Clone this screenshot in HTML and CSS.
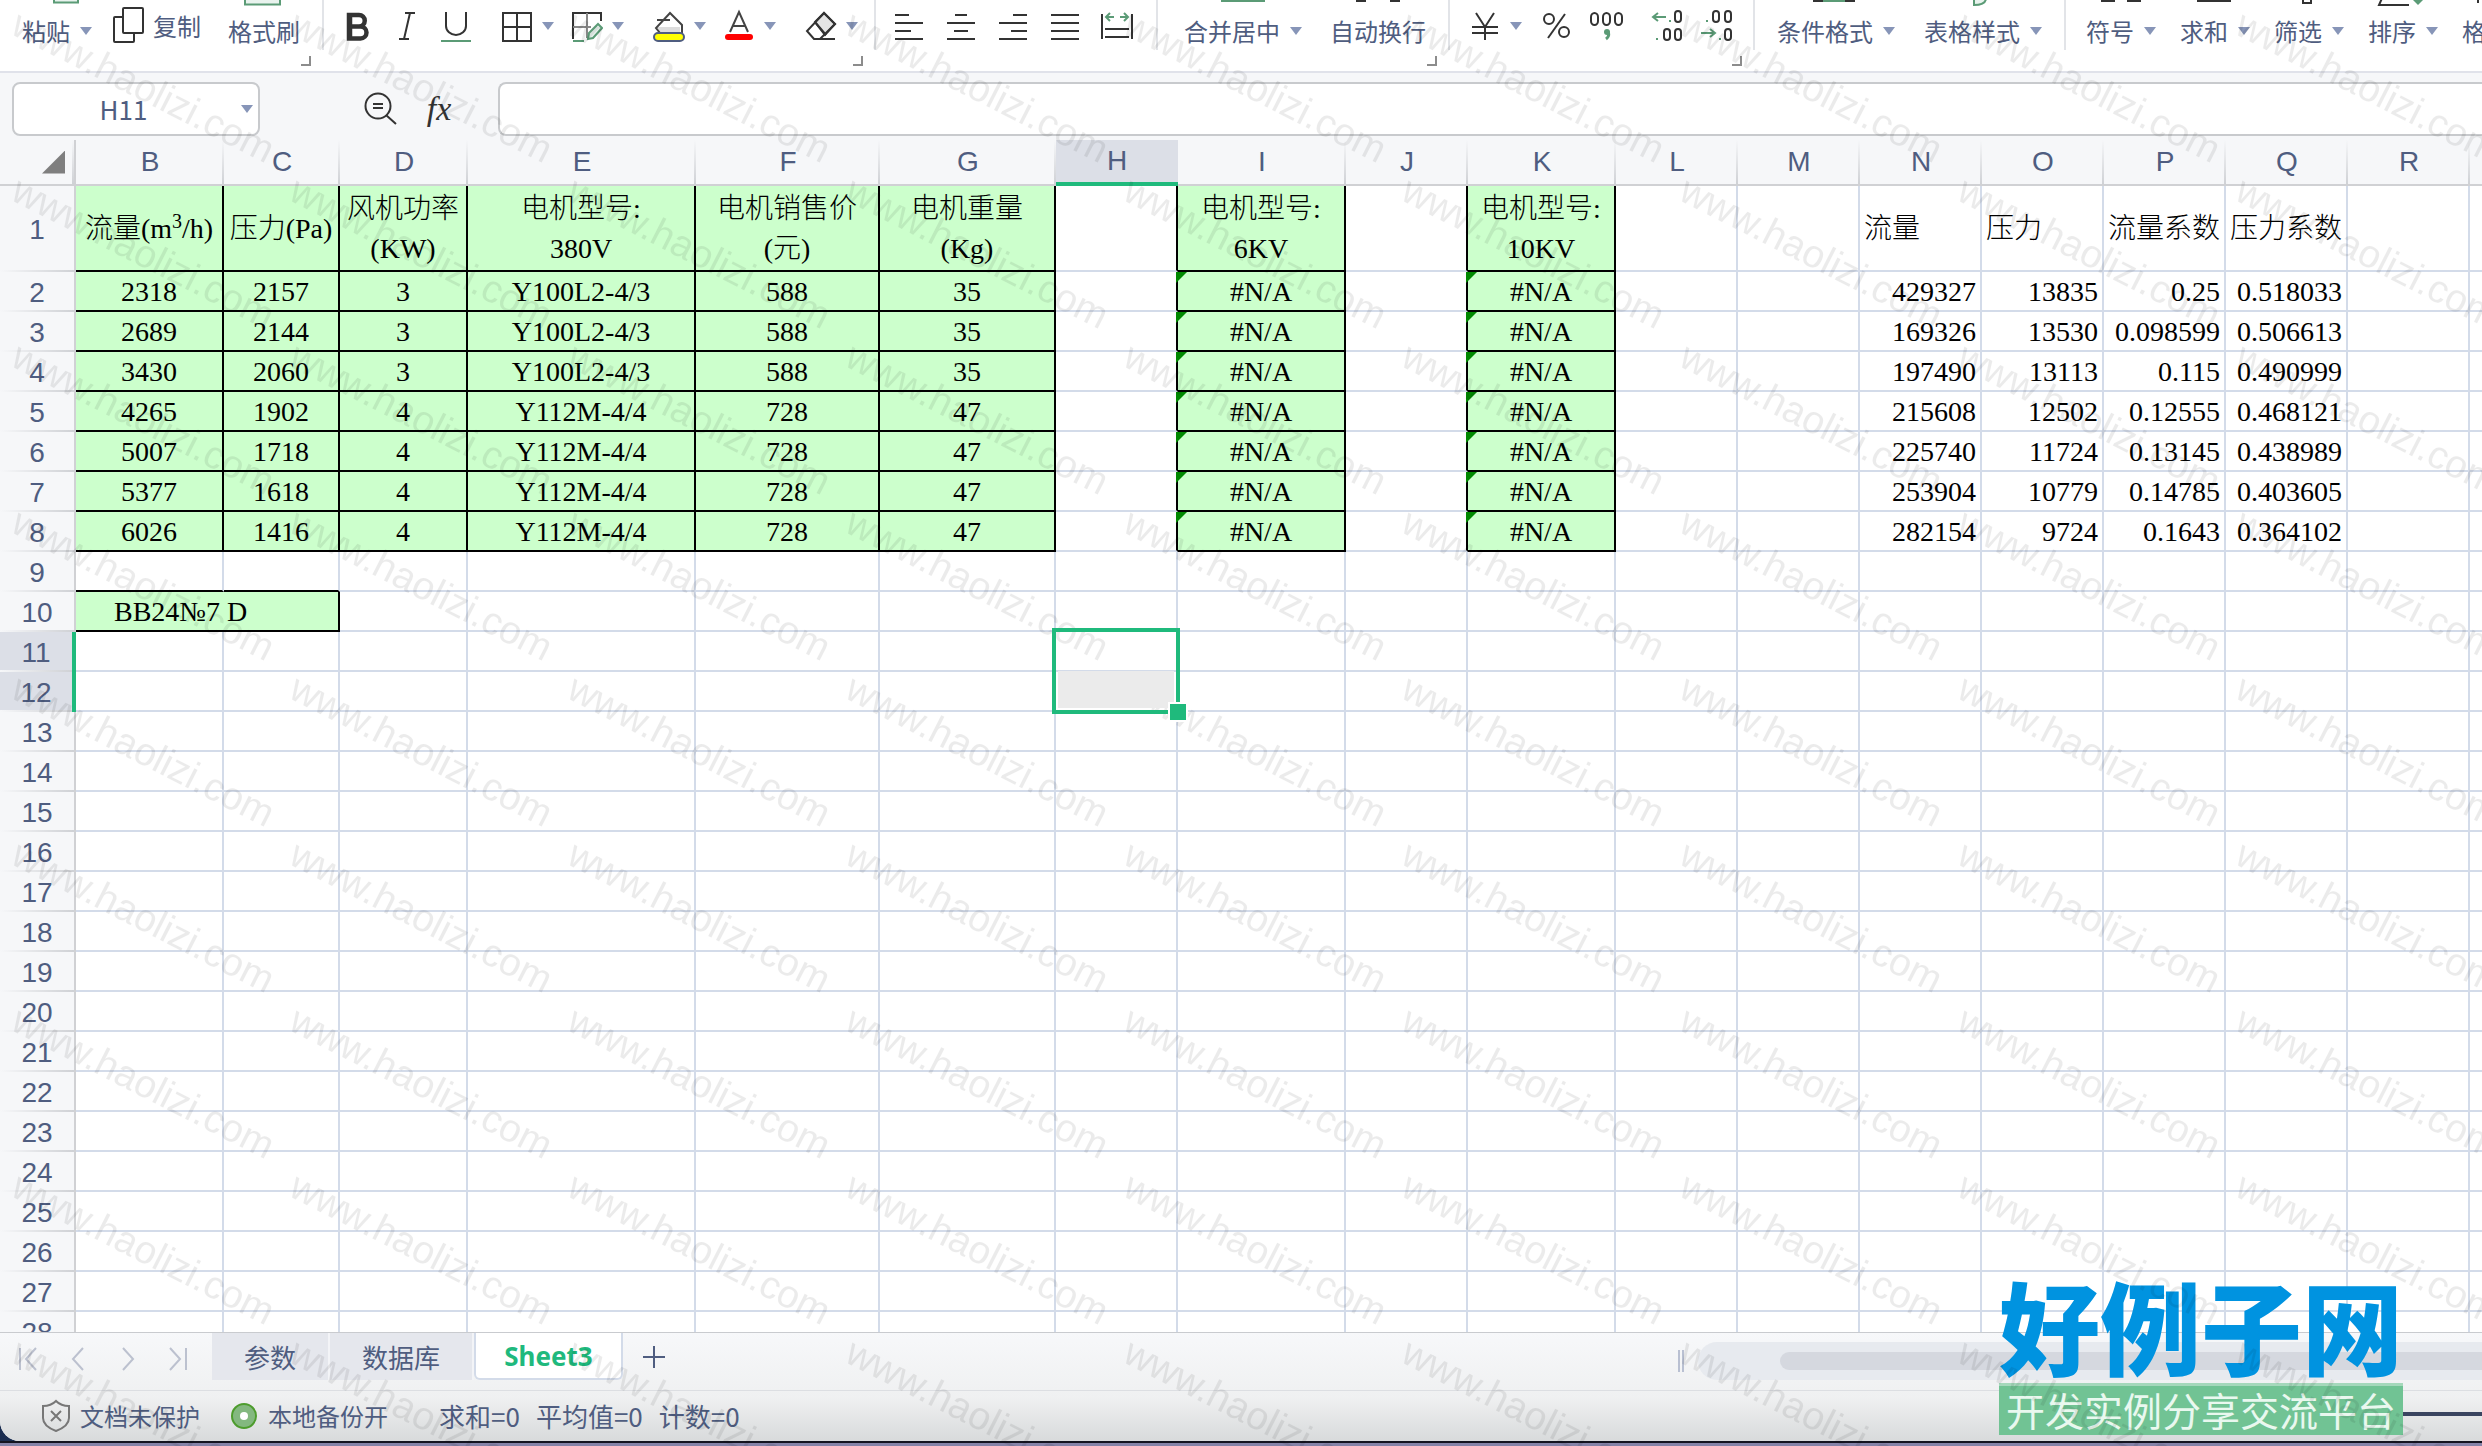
FILE: index.html
```html
<!DOCTYPE html>
<html lang="zh-CN">
<head>
<meta charset="utf-8">
<title>Sheet3</title>
<link rel="stylesheet" href="styles.css">
</head>
<body>
<div class="app">
  <header class="ribbon">
    <div class="group group-clip">
      <button class="labeled"><svg class="peek" width="68" height="6" viewBox="0 0 68 6"><path d="M31-9h24v11.500h-24z" fill="#e9f3ee" stroke="#5b9b76" stroke-width="2"/></svg><span>粘贴<i class="caret"></i></span></button>
      <button class="inline"><svg width="32" height="38" viewBox="0 0 32 38" fill="#fff" stroke="#333" stroke-width="2"><rect x="1" y="10" width="20" height="25" rx="1"/><rect x="10" y="1" width="20" height="25" rx="1"/></svg>复制</button>
      <button class="labeled"><svg class="peek" width="72" height="6" viewBox="0 0 72 6"><path d="M17-9h35v13.500h-35z" fill="#e9f3ee" stroke="#5b9b76" stroke-width="2"/></svg><span>格式刷</span></button>
      <i class="launcher"></i>
    </div>

    <div class="group group-font">
      <div class="set">
        <button class="tool" aria-label="加粗"><svg width="32" height="36" viewBox="0 0 32 36" fill="none" stroke="#333" stroke-width="4.500"><path d="M7 7h10a5.500 5.500 0 0 1 0 11.500H7zM7 18.500h11.500a6 6 0 0 1 0 12H7zM8 5v27"/></svg></button>
        <button class="tool" aria-label="斜体"><svg width="32" height="36" viewBox="0 0 32 36" fill="none" stroke="#333" stroke-width="2"><path d="M14 5h10M8 31h10M19 5l-6 26"/></svg></button>
        <button class="tool" aria-label="下划线"><svg width="32" height="36" viewBox="0 0 32 36" fill="none" stroke="#333" stroke-width="2"><path d="M6 4v14a10 9 0 0 0 20 0V4"/><path d="M1 33h30" stroke="#5b9b76"/></svg></button>
      </div>
      <div class="set">
        <button class="tool" aria-label="边框"><svg width="32" height="36" viewBox="0 0 32 36" fill="none" stroke="#333" stroke-width="2"><path d="M2 5h28v28H2zM16 5v28M2 19h28"/></svg><i class="caret"></i></button>
        <button class="tool" aria-label="单元格"><svg width="32" height="36" viewBox="0 0 32 36" fill="none" stroke-width="2"><path d="M2 31V5h28v8" stroke="#333"/><path d="M16 5v25M2 19h18" stroke="#888"/><path d="M2 33h11M17 31l1-6 9-9 4 4-9 10z" fill="#e9f3ee" stroke="#5b9b76"/></svg><i class="caret"></i></button>
      </div>
      <div class="set">
        <button class="tool" aria-label="填充颜色"><svg width="32" height="36" viewBox="0 0 32 36" fill="none" stroke="#444" stroke-width="2"><path d="M3 19h24v5H5z" fill="#ddd" stroke="none"/><path d="M4 12h13M7 25l-4-5L17 5l12 12v8"/><rect x="1" y="25" width="30" height="8" rx="4" fill="#ff0" stroke="#4f5d80"/></svg><i class="caret"></i></button>
        <button class="tool" aria-label="字体颜色"><svg width="32" height="36" viewBox="0 0 32 36" fill="none" stroke="#444" stroke-width="2"><path d="M7 24L16 4l9 20M10 18h12"/><rect x="2" y="26" width="28" height="6" rx="3" fill="#f00" stroke="none"/></svg><i class="caret"></i></button>
      </div>
      <div class="set">
        <button class="tool" aria-label="清除"><svg width="32" height="36" viewBox="0 0 32 36" fill="none" stroke="#333" stroke-width="2"><path d="M10 14l9-9 11 11-10 11z" fill="#e4e4e4"/><path d="M19 5l11 11-15 15H9l-7-8zM10 14l11 13M9 31h21"/></svg><i class="caret"></i></button>
      </div>
      <i class="launcher"></i>
    </div>

    <div class="group group-align">
      <button class="tool" aria-label="左对齐"><svg width="34" height="36" viewBox="0 0 34 36" stroke="#333" stroke-width="2"><path d="M3 7h14M3 15h28M3 23h16M3 31h28"/></svg></button>
      <button class="tool" aria-label="居中"><svg width="34" height="36" viewBox="0 0 34 36" stroke="#333" stroke-width="2"><path d="M11 7h12M3 15h28M10 23h14M3 31h28"/></svg></button>
      <button class="tool" aria-label="右对齐"><svg width="34" height="36" viewBox="0 0 34 36" stroke="#333" stroke-width="2"><path d="M17 7h14M3 15h28M15 23h16M3 31h28"/></svg></button>
      <button class="tool" aria-label="两端对齐"><svg width="34" height="36" viewBox="0 0 34 36" stroke="#333" stroke-width="2"><path d="M3 7h28M3 15h28M3 23h28M3 31h28"/></svg></button>
      <button class="tool" aria-label="分散对齐"><svg width="34" height="36" viewBox="0 0 34 36" fill="none" stroke="#333" stroke-width="2"><path d="M2 6v25M32 6v25M5 21h24M5 29h24"/><path d="M14 9H6m4-4L6 9l4 4M20 9h8m-4-4l4 4-4 4" stroke="#5b9b76"/></svg></button>
    </div>

    <div class="group group-merge">
      <button class="labeled"><svg class="peek" width="46" height="6" viewBox="0 0 46 6"><path d="M1 0h44v2h-44z" fill="#5b9b76"/></svg><span>合并居中<i class="caret"></i></span></button>
      <button class="labeled"><svg class="peek" width="46" height="6" viewBox="0 0 46 6"><path d="M1 0h10v2h-10zM35 0h10v2h-10z" fill="#333"/></svg><span>自动换行</span></button>
      <i class="launcher"></i>
    </div>

    <div class="group group-number">
      <div class="set">
        <button class="tool" aria-label="货币"><svg width="32" height="36" viewBox="0 0 32 36" fill="none" stroke="#333" stroke-width="2"><path d="M7 5l9 14 9-14M3 19h26M3 25h26M16 19v13"/></svg><i class="caret"></i></button>
        <button class="tool" aria-label="百分比"><svg width="32" height="36" viewBox="0 0 32 36" fill="none" stroke="#333" stroke-width="2"><circle cx="9" cy="11" r="5"/><circle cx="24" cy="24" r="5"/><path d="M25 6L8 30"/></svg></button>
        <button class="tool" aria-label="千位分隔"><svg width="34" height="36" viewBox="0 0 34 36" fill="none" stroke="#333" stroke-width="2"><rect x="1" y="5" width="7" height="12" rx="4"/><rect x="13" y="5" width="7" height="12" rx="4"/><rect x="25" y="5" width="7" height="12" rx="4"/><path d="M18 24q2 4-2 7" stroke="#5b9b76" stroke-width="3"/><circle cx="17" cy="24" r="3" fill="#5b9b76" stroke="none"/></svg></button>
      </div>
      <div class="set">
        <button class="tool" aria-label="增加小数位"><svg width="32" height="36" viewBox="0 0 32 36" fill="none" stroke="#333" stroke-width="2"><rect x="24" y="3" width="6" height="11" rx="3"/><rect x="13" y="21" width="6" height="11" rx="3"/><rect x="24" y="21" width="6" height="11" rx="3"/><path d="M15 9H2m5-4L2 9l5 4M18 13h2M5 31h2" stroke="#5b9b76"/></svg></button>
        <button class="tool" aria-label="减少小数位"><svg width="32" height="36" viewBox="0 0 32 36" fill="none" stroke="#333" stroke-width="2"><rect x="12" y="3" width="6" height="11" rx="3"/><rect x="24" y="3" width="6" height="11" rx="3"/><rect x="24" y="21" width="6" height="11" rx="3"/><path d="M0 25h14m-5-4l5 4-5 4M18 31h2M5 13h2" stroke="#5b9b76"/></svg></button>
      </div>
      <i class="launcher"></i>
    </div>

    <div class="group group-style">
      <button class="labeled"><svg class="peek" width="46" height="6" viewBox="0 0 46 6"><path d="M0 0h42v2H0z" fill="#333"/><path d="M10 0h22v2H10z" fill="#5b9b76"/></svg><span>条件格式<i class="caret"></i></span></button>
      <button class="labeled"><svg class="peek" width="46" height="6" viewBox="0 0 46 6"><path d="M14 0v5q11 0 12-6" fill="#e9f3ee" stroke="#5b9b76" stroke-width="2"/></svg><span>表格样式<i class="caret"></i></span></button>
    </div>

    <div class="group group-edit">
      <button class="labeled"><svg class="peek" width="40" height="6" viewBox="0 0 40 6"><path d="M0 0h14v2H0zM26 0h14v2H26z" fill="#333"/></svg><span>符号<i class="caret"></i></span></button>
      <button class="labeled"><svg class="peek" width="40" height="6" viewBox="0 0 40 6"><path d="M2 0h34v2H2z" fill="#333"/></svg><span>求和<i class="caret"></i></span></button>
      <button class="labeled"><svg class="peek" width="40" height="6" viewBox="0 0 40 6"><path d="M14-4v7h8v-7" fill="none" stroke="#333" stroke-width="2"/></svg><span>筛选<i class="caret"></i></span></button>
      <button class="labeled"><svg class="peek" width="56" height="6" viewBox="0 0 56 6"><path d="M8-4L4 5h30" fill="none" stroke="#333" stroke-width="2"/><path d="M38 0h10l-5 5z" fill="#5b9b76"/></svg><span>排序<i class="caret"></i></span></button>
      <button class="labeled"><svg class="peek" width="40" height="6" viewBox="0 0 40 6"><path d="M12 0v3" stroke="#333" stroke-width="2"/></svg><span>格式</span></button>
    </div>
  </header>

  <div class="formula-bar">
    <div class="name-box"><input type="text" value="H11" aria-label="名称框"><i class="caret"></i></div>
    <div class="formula-tools">
      <button aria-label="查找"><svg width="34" height="34" viewBox="0 0 34 34" fill="none" stroke="#333" stroke-width="2"><circle cx="14" cy="14" r="12.500"/><path d="M9 12h10M9 16h10M22 23l10 9"/></svg></button>
      <button class="fx" aria-label="插入函数">fx</button>
    </div>
    <input class="formula" type="text" aria-label="编辑栏">
  </div>

  <main class="sheet"><table id="grid"></table></main>

  <footer class="foot">
    <div class="tabs">
      <div class="nav">
        <button aria-label="第一张"><svg width="20" height="24" viewBox="0 0 20 24"><path d="M2 1v22M18 1L8 12l10 11"/></svg></button>
        <button aria-label="上一张"><svg width="20" height="24" viewBox="0 0 20 24"><path d="M15 1L5 12l10 11"/></svg></button>
        <button aria-label="下一张"><svg width="20" height="24" viewBox="0 0 20 24"><path d="M5 1l10 11L5 23"/></svg></button>
        <button aria-label="最后一张"><svg width="20" height="24" viewBox="0 0 20 24"><path d="M2 1l10 11L2 23M18 1v22"/></svg></button>
      </div>
      <button class="tab tab-first">参数</button>
      <button class="tab tab-second">数据库</button>
      <button class="tab tab-active">Sheet3</button>
      <button class="add" aria-label="新建工作表"><svg width="24" height="24" viewBox="0 0 24 24"><path d="M12 1v22M1 12h22" stroke="#4f5d80" stroke-width="2"/></svg></button>
      <div class="scroll"><i class="grip"></i><div class="track"><div class="thumb"></div></div></div>
    </div>
    <div class="status">
      <svg width="30" height="34" viewBox="0 0 30 34" fill="none" stroke="#777" stroke-width="2"><path d="M15 2q5 5 13 5v12q0 8-13 13Q2 27 2 19V7q8 0 13-5zM10 12l10 10M20 12L10 22"/></svg>
      <span class="protect">文档未保护</span>
      <svg width="26" height="26" viewBox="0 0 26 26"><circle cx="13" cy="13" r="12" fill="#83b87f" stroke="#4d9c2d" stroke-width="2"/><circle cx="13" cy="13" r="4" fill="#fff"/></svg>
      <span class="backup">本地备份开</span>
      <span class="sum">求和=0</span><span class="sum">平均值=0</span><span class="sum">计数=0</span>
    </div>
  </footer>
</div>
<div class="dock"></div>

<div class="brand"><strong>好例子网</strong><span>开发实例分享交流平台</span></div>
<i class="brand-rule"></i>

<svg class="watermark" width="100%" height="100%" aria-hidden="true">
  <defs><pattern id="wm" width="278" height="166" patternUnits="userSpaceOnUse"><text x="9" y="33" transform="rotate(27 9 33)">www.haolizi.com</text></pattern></defs>
  <rect width="100%" height="100%" fill="url(#wm)"/>
</svg>
<script src="sheet.js"></script>
</body>
</html>
```

FILE: styles.css
```css
* { box-sizing: border-box; }

body {
  margin: 0;
  height: 100vh;
  display: flex;
  flex-direction: column;
  overflow: hidden;
  background: #1b2d50;
  color: #4f5d80;
  font: 24px/24px "Noto Sans CJK SC", sans-serif;
}

button, input { font: inherit; color: inherit; border: 0; padding: 0; margin: 0; background: none; }
svg { display: block; flex: none; }

.app {
  flex: 1;
  min-height: 0;
  display: flex;
  flex-direction: column;
  background: #f6f7f9;
  border-radius: 0 0 0 20px;
  overflow: hidden;
}

.caret {
  flex: none;
  width: 12px;
  height: 8px;
  background: #8795b8;
  clip-path: polygon(0 0, 100% 0, 50% 100%);
}

/* Ribbon */
.ribbon { flex: none; display: flex; height: 73px; background: #fff; border-bottom: 2px solid #e0e2ea; overflow: hidden; }
.group { position: relative; flex: none; display: flex; align-items: flex-start; }
.group::after { content: ""; position: absolute; right: 0; top: 0; width: 2px; height: 50px; background: #e2e4e8; }
.group-edit::after { display: none; }
.launcher { position: absolute; right: 13px; top: 56px; width: 10px; height: 10px; border: solid #8c8c8c; border-width: 0 2px 2px 0; }
.set { display: flex; gap: 17px; }
.tool { display: flex; align-items: center; gap: 9px; height: 36px; margin-top: 8px; }
.labeled { display: flex; flex-direction: column; align-items: center; gap: 13px; white-space: nowrap; }
.labeled span { display: flex; align-items: center; gap: 10px; }
.peek { overflow: hidden; }
.inline { display: flex; align-items: center; gap: 8px; height: 38px; margin-top: 7px; padding-right: 6px; }
.group-clip { padding: 0 24px 0 22px; gap: 21px; }
.group-font { padding: 0 18px; gap: 29px; }
.group-align { padding: 0 24px 0 16px; gap: 18px; }
.group-merge { padding: 0 24px 0 26px; gap: 28px; }
.group-number { padding: 0 22px 0 19px; gap: 27px; }
.group-number .set { gap: 18px; }
.group-style { padding: 0 24px 0 22px; gap: 29px; }
.group-edit { padding: 0 20px; gap: 24px; }

/* Formula bar */
.formula-bar { flex: none; display: flex; align-items: center; height: 67px; padding: 5px 0 0 12px; }
.name-box {
  display: flex;
  align-items: center;
  width: 248px;
  height: 54px;
  padding-right: 5px;
  background: #fff;
  border: 2px solid #c8cacd;
  border-radius: 8px;
}
.name-box input { flex: 1; min-width: 0; height: 48px; padding: 0 8px 2px 0; text-align: center; font-size: 26px; }
.formula-tools { display: flex; justify-content: flex-end; align-items: center; gap: 24px; width: 238px; padding-right: 42px; }
.fx { font: italic 34px/34px "Liberation Serif", serif; color: #333; width: 34px; }
.formula { flex: 1; height: 54px; padding: 0 12px; background: #fff; border: 2px solid #c8cacd; border-right: 0; border-radius: 8px 0 0 8px; }

/* Grid */
.sheet { flex: 1; min-height: 0; overflow: hidden; background: #fff; }
table { table-layout: fixed; border-spacing: 0; width: 2592px; }
th { padding: 0; background: #f6f7f9; font: 28px/32px "Liberation Sans", sans-serif; }
thead th {
  height: 46px;
  border-bottom: 2px solid #d0d1d4;
  background: linear-gradient(#f6f7f9, #cfd1d5) right / 2px 100% no-repeat #f6f7f9;
}
tbody th {
  position: relative;
  height: 40px;
  padding-top: 2px;
  border-right: 2px solid #d0d1d4;
  background: linear-gradient(90deg, #f6f7f9, #cfd1d5) bottom / 100% 2px no-repeat #f6f7f9;
}
thead .corner { padding-left: 42px; border-right: 2px solid #d0d1d4; }
.corner i { display: block; width: 23px; height: 23px; background: #7f7f7f; clip-path: polygon(100% 0, 100% 100%, 0 100%); }
thead .picked { background: #dcdfe7; border-bottom: 4px solid #1fba7c; }
tbody .picked { background-color: #dcdfe7; border-right: 4px solid #1fba7c; }

td {
  position: relative;
  height: 40px;
  padding: 2px 4px 0;
  border: solid #d3dbe9;
  border-width: 0 2px 2px 0;
  color: #000;
  font: 300 28px/32px "Liberation Serif", "Noto Sans CJK SC", serif;
  white-space: nowrap;
  text-align: right;
}
.tall td, .tall th { height: 86px; }
.tall td { line-height: 40px; text-align: left; }
.tall .fill { padding: 2px 0 0; }
.fill, .tall .fill { background: #cfc; text-align: center; }
.fill { border-color: #000; }
.edge-right { border-right-color: #000; }
.edge-bottom { border-bottom-color: #000; }
.tall td.fill { text-align: center; }
td.model { padding-left: 38px; text-align: left; }
sup { font-size: 20px; line-height: 0; }
.error::before {
  content: "";
  position: absolute;
  left: -2px;
  top: 0;
  width: 11px;
  height: 11px;
  background: #080;
  clip-path: polygon(0 0, 100% 0, 0 100%);
}
.selection { position: absolute; z-index: 1; left: -4px; top: -4px; width: 128px; height: 86px; border: 4px solid #1fba7c; }
.selection::before { content: ""; position: absolute; left: 2px; right: 2px; bottom: 2px; height: 37px; background: #ebebeb; }
.selection::after { content: ""; position: absolute; right: -12px; bottom: -12px; width: 16px; height: 16px; background: #1fba7c; border: 2px solid #fff; }

/* Footer */
.foot { flex: none; background: linear-gradient(#f7f8fa, #eff0f1 60%, #d8dadb); border-top: 1px solid #c9cbcf; }
.tabs { display: flex; align-items: flex-start; height: 58px; border-bottom: 1px solid #dcdee2; }
.nav { display: flex; gap: 30px; width: 212px; padding: 14px 0 0 18px; }
.nav svg { fill: none; stroke: #bcc1cf; stroke-width: 2; }
.tab { height: 47px; font-size: 26px; line-height: 32px; background: #e5e7ed; border-right: 2px solid #f3f4f7; }
.tab-first { width: 118px; }
.tab-second { width: 144px; }
.tab-active { width: 149px; font: bold 26px/32px "Noto Sans", sans-serif; color: #1fb97d; background: #fff; border: 2px solid #d3dbe9; border-top: 0; border-radius: 0 0 6px 6px; }
.add { margin: 12px 0 0 19px; }
.scroll { flex: 1; display: flex; justify-content: flex-end; align-items: center; padding-top: 9px; }
.grip { width: 6px; height: 22px; margin-right: 14px; border: solid #b9c0d2; border-width: 0 2px; }
.track { width: 784px; height: 38px; padding: 10px 0 0 82px; border-radius: 19px 0 0 19px; background: #e7eaef; }
.thumb { height: 18px; border-radius: 9px 0 0 9px; background: #d5d8df; }
.status { display: flex; align-items: center; height: 50px; padding: 0 0 0 41px; }
.protect { margin: 0 31px 0 9px; }
.backup { margin: 0 51px 0 11px; }
.sum { margin-right: 16px; font-size: 26px; }
.dock { flex: none; height: 5px; background: #8583a8; border-top: 2px solid #141420; }

/* Overlays */
.brand { position: absolute; right: 79px; bottom: 11px; width: 404px; display: flex; flex-direction: column; }
.brand strong { font: 900 101px/118px "Noto Sans CJK SC", sans-serif; color: #0093e0; white-space: nowrap; }
.brand span { height: 52px; border-top: 3px solid #a5d8bb; background: #71c394; color: #e9f8ef; font-size: 39px; line-height: 46px; text-align: center; white-space: nowrap; }
.brand-rule { position: absolute; right: 0; bottom: 30px; width: 79px; height: 4px; background: #3a4560; }
.watermark { position: fixed; inset: 0; pointer-events: none; }
.watermark text { font: 39px "Liberation Sans", sans-serif; fill: #000; fill-opacity: .08; }
```

FILE: sheet.js
```js
const widths = { B: 148, C: 116, D: 128, E: 228, F: 184, G: 176, H: 122, I: 168, J: 122, K: 148,
  L: 122, M: 122, N: 122, O: 122, P: 122, Q: 122, R: 122, S: 122 };
const columns = Object.keys(widths);
const LAST_ROW = 28;

const titles = {
  B: '流量(m<sup>3</sup>/h)', C: '压力(Pa)', D: '风机功率<br>(KW)', E: '电机型号:<br>380V',
  F: '电机销售价<br>(元)', G: '电机重量<br>(Kg)', I: '电机型号:<br>6KV', K: '电机型号:<br>10KV',
  N: '流量', O: '压力', P: '流量系数', Q: '压力系数'
};
const keys = ['B', 'C', 'D', 'E', 'F', 'G', 'N', 'O', 'P', 'Q'];
const records = [
  [2318, 2157, 3, 'Y100L2-4/3', 588, 35, 429327, 13835, '0.25', '0.518033'],
  [2689, 2144, 3, 'Y100L2-4/3', 588, 35, 169326, 13530, '0.098599', '0.506613'],
  [3430, 2060, 3, 'Y100L2-4/3', 588, 35, 197490, 13113, '0.115', '0.490999'],
  [4265, 1902, 4, 'Y112M-4/4', 728, 47, 215608, 12502, '0.12555', '0.468121'],
  [5007, 1718, 4, 'Y112M-4/4', 728, 47, 225740, 11724, '0.13145', '0.438989'],
  [5377, 1618, 4, 'Y112M-4/4', 728, 47, 253904, 10779, '0.14785', '0.403605'],
  [6026, 1416, 4, 'Y112M-4/4', 728, 47, 282154, 9724, '0.1643', '0.364102']
];

function value(row, col) {
  if (row === 1) return titles[col] || '';
  if (row > 8) return '';
  if (col === 'I' || col === 'K') return '#N/A';
  const i = keys.indexOf(col);
  return i < 0 ? '' : records[row - 2][i];
}

function cell(row, col) {
  if (row === 10 && col === 'B') return '<td class="fill model" colspan="2">BB24№7 D</td>';
  if (row === 10 && col === 'C') return '';
  const cls = [];
  if (row <= 8 && 'BCDEFGIK'.includes(col)) cls.push('fill');
  if (row <= 8 && 'HJ'.includes(col)) cls.push('edge-right');
  if (row === 9 && 'BC'.includes(col)) cls.push('edge-bottom');
  if (row > 1 && row <= 8 && 'IK'.includes(col)) cls.push('error');
  const inner = row === 11 && col === 'H' ? '<div class="selection"></div>' : value(row, col);
  return `<td class="${cls.join(' ')}">${inner}</td>`;
}

let html = '<colgroup><col style="width:76px">' +
  columns.map(c => `<col style="width:${widths[c]}px">`).join('') + '</colgroup>' +
  '<thead><tr><th class="corner"><i></i></th>' +
  columns.map(c => `<th class="${c === 'H' ? 'picked' : ''}">${c}</th>`).join('') + '</tr></thead><tbody>';
for (let r = 1; r <= LAST_ROW; r++) {
  html += `<tr class="${r === 1 ? 'tall' : ''}"><th class="${r === 11 || r === 12 ? 'picked' : ''}">${r}</th>` +
    columns.map(c => cell(r, c)).join('') + '</tr>';
}
document.getElementById('grid').innerHTML = html + '</tbody>';
```
